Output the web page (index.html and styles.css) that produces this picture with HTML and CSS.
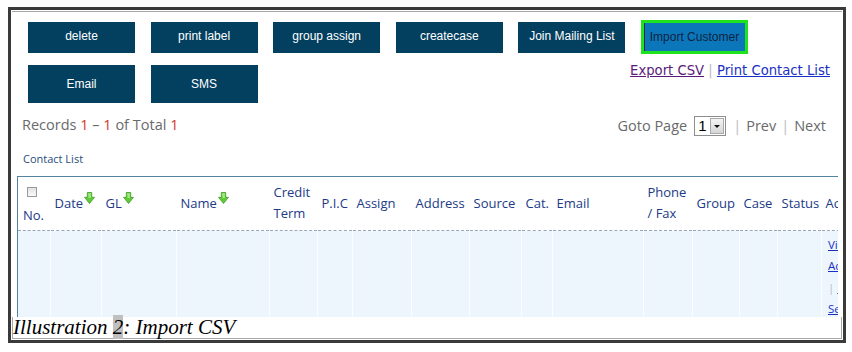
FILE: index.html
```html
<!DOCTYPE html>
<html lang="en">
<head>
    <meta charset="UTF-8">
    <meta name="viewport" content="width=device-width, initial-scale=1.0">
    <title>Illustration 2: Import CSV</title>
    <link rel="stylesheet" href="styles.css">
</head>
<body>
    <div class="frame">
        <div class="paper">
            <div class="shot">
                <div class="toolbar">
                    <div class="btn-row">
                        <button class="btn">delete</button>
                        <button class="btn">print label</button>
                        <button class="btn">group assign</button>
                        <button class="btn">createcase</button>
                        <button class="btn">Join Mailing List</button>
                        <button class="btn btn-active">Import Customer</button>
                    </div>
                    <div class="btn-row row-two">
                        <div class="btn-group">
                            <button class="btn btn-tall">Email</button>
                            <button class="btn btn-tall">SMS</button>
                        </div>
                        <div class="export-links">
                            <a class="visited" href="#">Export CSV</a> <span class="sep">|</span> <a href="#">Print Contact List</a>
                        </div>
                    </div>
                </div>

                <div class="records">
                    <div class="records-count">Records <b>1</b> &ndash; <b>1</b> of Total <b>1</b></div>
                    <div class="pager">
                        Goto Page
                        <span class="page-select"><span class="page-value">1</span><span class="page-drop"></span></span>
                        <span class="sep">|</span> Prev <span class="sep">|</span> Next
                    </div>
                </div>

                <div class="list-title">Contact List</div>

                <table class="grid">
                    <colgroup>
                        <col><col><col><col><col><col><col><col>
                        <col><col><col><col><col><col><col><col>
                    </colgroup>
                    <thead>
                        <tr>
                            <th class="no-col"><span class="chk"></span>No.</th>
                            <th>Date<svg class="sort" width="11" height="12" viewBox="0 0 11 12"><path d="M3.3 0.5H7.7V5.3H10.5L5.5 11.5L0.5 5.3H3.3Z" fill="#62c83c" stroke="#3f9d22" stroke-width="0.8"/><path d="M4.1 1.2H6.9V6H4.6Z" fill="#a4e884"/></svg></th>
                            <th>GL<svg class="sort" width="11" height="12" viewBox="0 0 11 12"><path d="M3.3 0.5H7.7V5.3H10.5L5.5 11.5L0.5 5.3H3.3Z" fill="#62c83c" stroke="#3f9d22" stroke-width="0.8"/><path d="M4.1 1.2H6.9V6H4.6Z" fill="#a4e884"/></svg></th>
                            <th>Name<svg class="sort" width="11" height="12" viewBox="0 0 11 12"><path d="M3.3 0.5H7.7V5.3H10.5L5.5 11.5L0.5 5.3H3.3Z" fill="#62c83c" stroke="#3f9d22" stroke-width="0.8"/><path d="M4.1 1.2H6.9V6H4.6Z" fill="#a4e884"/></svg></th>
                            <th>Credit Term</th>
                            <th>P.I.C</th>
                            <th>Assign</th>
                            <th>Address</th>
                            <th>Source</th>
                            <th>Cat.</th>
                            <th>Email</th>
                            <th>Phone / Fax</th>
                            <th>Group</th>
                            <th>Case</th>
                            <th>Status</th>
                            <th>Action</th>
                        </tr>
                    </thead>
                    <tbody>
                        <tr>
                            <td></td><td></td><td></td><td></td><td></td><td></td><td></td><td></td>
                            <td></td><td></td><td></td><td></td><td></td><td></td><td></td>
                            <td class="actions">
                                <a href="#">View</a><br>
                                <a href="#">Add Case</a><br>
                                <span class="sep">|</span> <a href="#">Edit</a><br>
                                <a href="#">Send SMS</a>
                            </td>
                        </tr>
                    </tbody>
                </table>
            </div>
            <p class="caption">Illustration <span class="field">2</span>: Import CSV</p>
        </div>
    </div>
</body>
</html>
```

FILE: styles.css
```css
body {
    margin: 0;
    background: #fff;
    font-family: "Open Sans", sans-serif;
}

.frame {
    width: 830px;
    margin: 7px 0 0 8px;
    padding: 1px;
    border: 3px solid #3a3a3a;
}

.paper {
    border-top: 1px solid #a8a8a8;
    border-bottom: 1px solid #a8a8a8;
}

.shot {
    width: 826px;
    height: 305px;
    overflow: hidden;
    background: #fff;
}

/* buttons */

.toolbar {
    padding: 10px 8px 0 16px;
}

.btn-row {
    display: flex;
    align-items: flex-start;
    gap: 15.6px;
    height: 31px;
}

.row-two {
    justify-content: space-between;
    margin-top: 12px;
    height: 38px;
}

.btn-group {
    display: flex;
    gap: 15.6px;
}

.btn {
    box-sizing: border-box;
    width: 107px;
    height: 31px;
    margin: 0;
    padding: 0 0 3px;
    border: none;
    background: #033f5f;
    color: #fff;
    font-family: "Liberation Sans", Arial, sans-serif;
    font-size: 12px;
}

.btn-tall {
    height: 38px;
    padding: 0 0 1px;
}

.btn-active {
    height: 34px;
    margin-top: -2px;
    padding: 0 0 1px;
    border: 3px solid #1fe21f;
    background: #0b77ba;
    box-shadow: inset 1px 0 0 #08314a;
    color: #0e2442;
}

.export-links {
    margin-top: -2px;
    font-family: "DejaVu Sans", Verdana, sans-serif;
    font-size: 13.2px;
    line-height: 16px;
}

.export-links a {
    color: #1a2fc4;
}

.export-links a.visited {
    color: #5a1a7a;
}

.sep {
    color: #bbb;
}

/* records bar */

.records {
    display: flex;
    justify-content: space-between;
    align-items: center;
    height: 20px;
    margin-top: 13px;
    padding: 0 12px 0 10px;
    color: #6a6a6a;
    font-size: 14.5px;
}

.records-count {
    margin-top: -4px;
}

.records-count b {
    font-weight: normal;
    color: #d23a2a;
}

.pager {
    display: flex;
    align-items: center;
    gap: 5px;
    margin-top: -1px;
}

.page-select {
    display: flex;
    align-items: center;
    box-sizing: border-box;
    width: 32px;
    height: 20px;
    margin: 1px 2px 0;
    padding: 1px;
    border: 1px solid #8e8e8e;
    background: #fff;
}

.page-value {
    flex: 1;
    padding-left: 2px;
    color: #000;
    font-family: "Liberation Sans", Arial, sans-serif;
    font-size: 15px;
    line-height: 16px;
}

.page-drop {
    position: relative;
    box-sizing: border-box;
    width: 14px;
    height: 16px;
    border: 1px solid #a9a9a9;
    background: linear-gradient(#f4f4f4, #d6d6d6);
}

.page-drop::after {
    content: "";
    position: absolute;
    left: 3px;
    top: 6px;
    border-left: 3px solid transparent;
    border-right: 3px solid transparent;
    border-top: 3px solid #111;
}

.list-title {
    margin-top: 16px;
    padding-left: 11px;
    color: #1f4d7e;
    font-size: 11px;
    line-height: 14px;
}

/* contact table */

.grid {
    table-layout: fixed;
    width: 882px;
    margin: 10px 0 0 5px;
    border-collapse: collapse;
    border-top: 1px solid #55829f;
    border-left: 1px solid #55829f;
}

.grid col:nth-child(1) { width: 33px; }
.grid col:nth-child(2) { width: 51px; }
.grid col:nth-child(3) { width: 75px; }
.grid col:nth-child(4) { width: 93px; }
.grid col:nth-child(5) { width: 48px; }
.grid col:nth-child(6) { width: 35px; }
.grid col:nth-child(7) { width: 59px; }
.grid col:nth-child(8) { width: 58px; }
.grid col:nth-child(9) { width: 52px; }
.grid col:nth-child(10) { width: 31px; }
.grid col:nth-child(11) { width: 91px; }
.grid col:nth-child(12) { width: 49px; }
.grid col:nth-child(13) { width: 47px; }
.grid col:nth-child(14) { width: 38px; }
.grid col:nth-child(15) { width: 44px; }
.grid col:nth-child(16) { width: 78px; }

.grid th {
    box-sizing: border-box;
    height: 54px;
    padding: 0 3px 1px 4px;
    border-bottom: 1px dashed #9aa6b8;
    color: #213a86;
    font-size: 13px;
    font-weight: normal;
    line-height: 21px;
    text-align: left;
    vertical-align: middle;
    white-space: normal;
}

.grid th.no-col {
    padding: 0 0 4px 5px;
    vertical-align: bottom;
}

.chk {
    display: block;
    box-sizing: border-box;
    width: 10px;
    height: 10px;
    margin: 0 0 8px 4px;
    border: 1px solid #9a9a9a;
    background: linear-gradient(#e2e2e2, #fafafa);
}

.sort {
    margin-left: 1px;
    vertical-align: 4px;
}

.grid td {
    height: 92px;
    padding: 0;
    border-right: 1px solid #fafcff;
    background: #eef6fd;
    vertical-align: top;
}

.grid td.actions {
    padding: 3px 0 0 6px;
    font-size: 11.5px;
    line-height: 21.3px;
    white-space: nowrap;
}

.actions a {
    color: #1a2fc4;
}

/* caption */

.caption {
    height: 21px;
    margin: 0;
    border-left: 1px solid #a8a8a8;
    border-right: 1px solid #a8a8a8;
    color: #000;
    font-family: "Liberation Serif", "Times New Roman", serif;
    font-size: 21px;
    font-style: italic;
    line-height: 21px;
}

.field {
    background: #c0c0c0;
}
```
